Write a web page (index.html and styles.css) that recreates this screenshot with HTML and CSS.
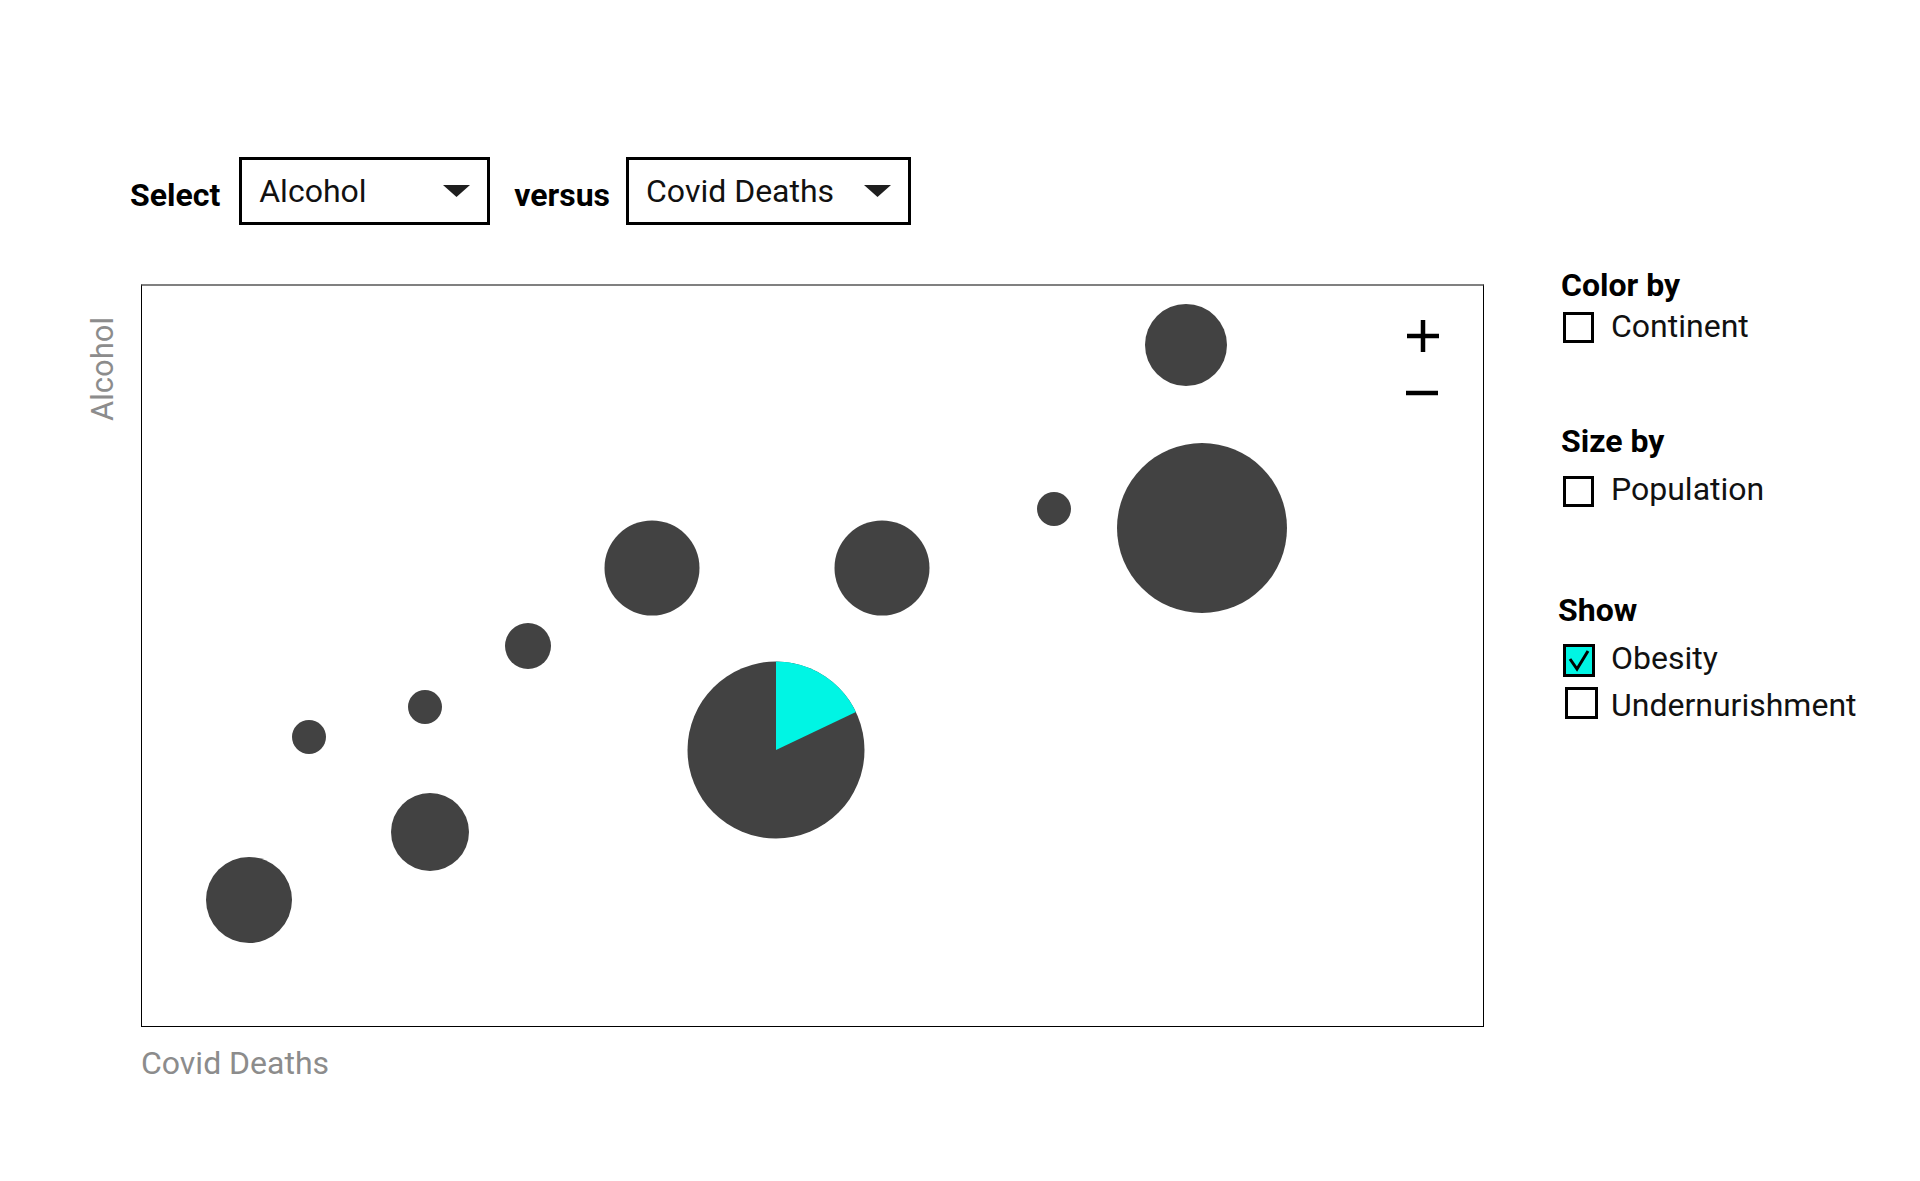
FILE: index.html
```html
<!DOCTYPE html>
<html lang="en">
<head>
<meta charset="utf-8">
<title>Scatter</title>
<link rel="stylesheet" href="styles.css">
</head>
<body>
<div class="app">
  <main class="main">
    <div class="controls">
      <span class="label label-select">Select</span>
      <div class="select select-a">
        <span class="select-text">Alcohol</span>
        <svg class="caret" width="27" height="12" viewBox="0 0 27 12"><polygon points="0,0 27,0 13.5,12"/></svg>
      </div>
      <span class="label label-versus">versus</span>
      <div class="select select-b">
        <span class="select-text">Covid Deaths</span>
        <svg class="caret" width="27" height="12" viewBox="0 0 27 12"><polygon points="0,0 27,0 13.5,12"/></svg>
      </div>
    </div>
    <div class="plot-row">
      <div class="ylabel">Alcohol</div>
      <div class="plot-col">
        <div class="chart">
          <svg class="plot" width="1341" height="740" viewBox="0 0 1341 740">
            <g fill="#424242">
              <circle cx="107" cy="614" r="43"/>
              <circle cx="288" cy="546" r="39"/>
              <circle cx="167" cy="451" r="17"/>
              <circle cx="283" cy="421" r="17"/>
              <circle cx="386" cy="360" r="23"/>
              <circle cx="510" cy="282" r="47.5"/>
              <circle cx="740" cy="282" r="47.5"/>
              <circle cx="912" cy="223" r="17"/>
              <circle cx="1044" cy="59" r="41"/>
              <circle cx="1060" cy="242" r="85"/>
              <circle cx="634" cy="464" r="88.5"/>
            </g>
            <path d="M634 464 L634 375.5 A88.5 88.5 0 0 1 713.9 426 Z" fill="#00F5E4"/>
          </svg>
          <div class="zoom">
            <svg class="zoom-in" width="34" height="34" viewBox="0 0 34 34"><path d="M1 17 H33 M17 1 V33" stroke="#000" stroke-width="4.5"/></svg>
            <svg class="zoom-out" width="34" height="6" viewBox="0 0 34 6"><path d="M1 3 H33" stroke="#000" stroke-width="4.5"/></svg>
          </div>
        </div>
        <div class="xlabel">Covid Deaths</div>
      </div>
    </div>
  </main>
  <aside class="side">
    <section class="group group-color">
      <h3 class="heading">Color by</h3>
      <label class="option option-continent"><span class="cb"></span><span class="opt-text">Continent</span></label>
    </section>
    <section class="group group-size">
      <h3 class="heading">Size by</h3>
      <label class="option option-population"><span class="cb"></span><span class="opt-text">Population</span></label>
    </section>
    <section class="group group-show">
      <h3 class="heading heading-show">Show</h3>
      <label class="option option-obesity"><span class="cb cb-checked"><svg width="26" height="27" viewBox="0 0 26 27"><path d="M4 12 L11 22 L22 4" fill="none" stroke="#000" stroke-width="3"/></svg></span><span class="opt-text">Obesity</span></label>
      <label class="option option-under"><span class="cb cb-under"></span><span class="opt-text">Undernurishment</span></label>
    </section>
  </aside>
</div>
</body>
</html>
```
FILE: styles.css
```css
* { box-sizing: border-box; }
html, body { margin: 0; padding: 0; background: #fff; }
body {
  font-family: Roboto, "Liberation Sans", sans-serif;
  color: #000;
  width: 1920px;
  height: 1181px;
  overflow: hidden;
}
.app {
  display: flex;
  align-items: flex-start;
  padding-left: 87px;
}
.main {
  width: 1396px;
  padding-top: 157px;
  display: flex;
  flex-direction: column;
}
.controls {
  display: flex;
  align-items: center;
  height: 68px;
  margin-left: 43px;
}
.label {
  font-size: 32px;
  font-weight: 700;
  line-height: 1;
  padding-top: 8px;
}
.label-select { margin-right: 19px; }
.label-versus { margin-left: 24px; margin-right: 16px; }
.select {
  height: 68px;
  border: 3px solid #000;
  display: flex;
  align-items: center;
  justify-content: space-between;
  padding: 0 17px 0 17px;
}
.select-a { width: 251px; }
.select-b { width: 285px; padding-left: 17px; }
.select-text {
  font-size: 32px;
  line-height: 1;
  color: #111;
}
.caret { fill: #1e1e1e; display: block; margin-top: -1px; }
.plot-row {
  display: flex;
  margin-top: 59px;
}
.ylabel {
  writing-mode: vertical-rl;
  transform: rotate(180deg);
  font-size: 31px;
  line-height: 31px;
  width: 31px;
  color: #8c8c8c;
  margin-top: 33px;
  margin-right: 23px;
  align-self: flex-start;
}
.plot-col {
  display: flex;
  flex-direction: column;
}
.chart {
  position: relative;
  width: 1343px;
  height: 743px;
  border: 1px solid #000;
  border-top: 2px solid #808080;
}
.plot { display: block; }
.zoom {
  position: absolute;
  top: 33px;
  right: 43px;
  display: flex;
  flex-direction: column;
  align-items: flex-end;
  gap: 37px;
}
.zoom svg { display: block; }
.zoom-out { margin-right: 1px; }
.xlabel {
  font-size: 32px;
  line-height: 1;
  color: #8c8c8c;
  margin-top: 20px;
}
.side {
  margin-left: 77px;
  padding-top: 269px;
  display: flex;
  flex-direction: column;
}
.heading {
  margin: 0;
  font-size: 32px;
  font-weight: 700;
  line-height: 32px;
  height: 32px;
  margin-left: 1px;
}
.heading-show { margin-left: -2px; }
.option {
  display: flex;
  align-items: flex-start;
  gap: 17px;
  height: 31px;
}
.cb {
  width: 31px;
  height: 31px;
  border: 3px solid #000;
  flex: none;
  display: flex;
  align-items: center;
  justify-content: center;
  margin-left: 3px;
}
.opt-text {
  font-size: 32px;
  line-height: 31px;
  color: #111;
  margin-top: -1px;
}
.option-continent { margin-top: 11px; }
.group-size { margin-top: 82px; }
.option-population { margin-top: 19px; }
.option-population .opt-text { margin-top: -2px; }
.group-show { margin-top: 87px; }
.option-obesity { margin-top: 18px; height: 33px; gap: 16px; }
.cb-checked {
  width: 32px;
  height: 33px;
  background: #00F5E4;
}
.cb-checked svg { display: block; }
.option-obesity .opt-text { margin-top: -1px; }
.option-under { margin-top: 10px; height: 32px; gap: 13px; }
.cb-under { width: 33px; height: 32px; margin-left: 5px; }
.option-under .opt-text { margin-top: 3px; }
```
